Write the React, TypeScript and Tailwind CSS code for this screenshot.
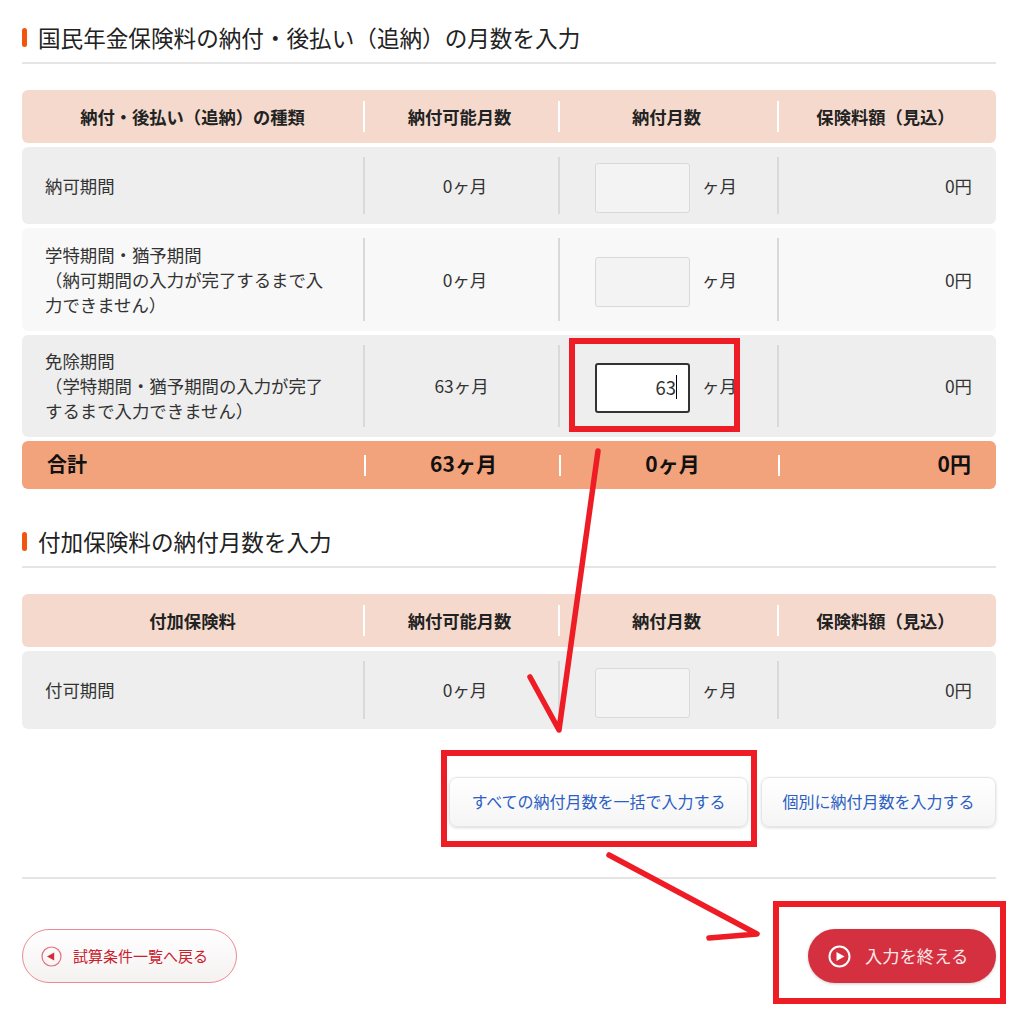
const font = { fontFamily: '"Noto Sans CJK JP", "Noto Sans", sans-serif' };

const cols = "grid grid-cols-[341px_195px_219px_219px]";

function HeaderRow({ first }: { first: string }) {
  const labels = [first, "納付可能月数", "納付月数", "保険料額（見込）"];
  return (
    <div className={`${cols} h-[53px] items-center rounded-md bg-[#f4d9cc] text-[17.3px] font-bold text-[#222]`}>
      {labels.map((label, i) => (
        <div key={label} className={`flex h-[31px] items-center justify-center ${i > 0 ? "border-l-2 border-white pr-[4px]" : ""}`}>
          {label}
        </div>
      ))}
    </div>
  );
}

function MonthInput({ state }: { state: "idle" | "focus" }) {
  if (state === "focus") {
    return (
      <div className="mt-[4px] flex h-[50px] w-[95px] items-center justify-end rounded-[3px] border-2 border-[#333] bg-white pb-[2px] pr-[11px] text-[18.5px] text-[#333]">
        63<span className="h-[24px] w-px bg-black" />
      </div>
    );
  }
  return <div className="mt-[5px] h-[50px] w-[95px] rounded-[3px] border border-[#d9d9d9] bg-[#f3f3f3]" />;
}

function DataRow({
  height,
  tone,
  label,
  available,
  focus,
}: {
  height: string;
  tone: string;
  label: React.ReactNode;
  available: string;
  focus?: boolean;
}) {
  return (
    <div className={`${cols} items-center rounded-md text-[17.4px] leading-[25px] text-[#333] ${height} ${tone}`}>
      <div className="pb-[1px] pl-[23px] pr-[30px]">{label}</div>
      <div className={`flex h-[calc(100%-20px)] items-center justify-center border-l-2 border-[#d9d9d9] pb-[1px] ${focus ? "" : "pl-[7px]"}`}>
        {available}
      </div>
      <div className="flex h-[calc(100%-20px)] items-center gap-[12px] border-l-2 border-[#d9d9d9] pl-[35px]">
        <MonthInput state={focus ? "focus" : "idle"} />
        <span className="pb-[1px]">ヶ月</span>
      </div>
      <div className="flex h-[calc(100%-20px)] items-center justify-end border-l-2 border-[#d9d9d9] pb-[1px] pr-[24px]">0円</div>
    </div>
  );
}

function SectionTitle({ children }: { children: React.ReactNode }) {
  return (
    <div className="flex h-[51px] items-center gap-[11px] border-b-2 border-[#e5e5e5] text-[22.6px] text-[#222]">
      <span className="h-[19px] w-[5px] rounded-sm bg-[#f0560f]" />
      {children}
    </div>
  );
}

function Annotations() {
  return (
    <>
      <div className="absolute left-[569px] top-[338px] h-[94px] w-[171px] border-[6px] border-[#ee1c25]" />
      <div className="absolute left-[441px] top-[750px] h-[97px] w-[316px] border-[6px] border-[#ee1c25]" />
      <div className="absolute left-[773px] top-[901px] h-[103px] w-[233px] border-[6px] border-[#ee1c25]" />
      <svg className="absolute left-0 top-0" width="1019" height="1024" fill="none" stroke="#ee1c25" strokeWidth="5.5" strokeLinecap="round" strokeLinejoin="round">
        <path d="M598 451 L559 730 L530 677" />
        <path d="M609 855 L757 934 L709 938" />
      </svg>
    </>
  );
}

export default function App() {
  return (
    <div className="relative h-[1024px] w-[1019px] overflow-hidden bg-white" style={font}>
      <div className="ml-[22px] flex w-[974px] flex-col pt-[13px]">
        <SectionTitle>国民年金保険料の納付・後払い（追納）の月数を入力</SectionTitle>

        <div className="mt-[26px] flex flex-col gap-[4px]">
          <HeaderRow first="納付・後払い（追納）の種類" />
          <DataRow height="h-[77px]" tone="bg-[#eeeeee]" label="納可期間" available="0ヶ月" />
          <DataRow
            height="h-[103px]"
            tone="bg-[#f8f8f8]"
            label={
              <>
                学特期間・猶予期間
                <br />
                （納可期間の入力が完了するまで入力できません）
              </>
            }
            available="0ヶ月"
          />
          <DataRow
            height="h-[102px]"
            tone="bg-[#eeeeee]"
            label={
              <>
                免除期間
                <br />
                （学特期間・猶予期間の入力が完了するまで入力できません）
              </>
            }
            available="63ヶ月"
            focus
          />
          <div className="grid h-[48px] grid-cols-[342px_195px_219px_218px] items-center rounded-md bg-[#f2a37b] text-[21px] font-bold text-[#111]">
            <div className="pb-[2px] pl-[25px] text-[20px]">合計</div>
            <div className="flex h-[21px] items-center justify-center border-l-2 border-white pb-[2px] pl-[2px]">63ヶ月</div>
            <div className="flex h-[21px] items-center justify-center border-l-2 border-white pb-[2px] pl-[6px]">0ヶ月</div>
            <div className="flex h-[21px] items-center justify-end border-l-2 border-white pb-[2px] pr-[25px]">0円</div>
          </div>
        </div>

        <div className="mt-[28px]">
          <SectionTitle>付加保険料の納付月数を入力</SectionTitle>
        </div>

        <div className="mt-[26px] flex flex-col gap-[4px]">
          <HeaderRow first="付加保険料" />
          <DataRow height="h-[78px]" tone="bg-[#eeeeee]" label="付可期間" available="0ヶ月" />
        </div>

        <div className="mt-[48px] flex justify-end gap-[13px]">
          <button className="h-[50px] w-[299px] rounded-lg border border-[#e6e6e6] bg-gradient-to-b from-white to-[#f5f5f5] pb-[2px] text-[16px] text-[#2b5fc4] shadow-[0_1px_3px_rgba(0,0,0,0.15)]">
            すべての納付月数を一括で入力する
          </button>
          <button className="h-[50px] w-[235px] rounded-lg border border-[#e6e6e6] bg-gradient-to-b from-white to-[#f5f5f5] pb-[2px] text-[16px] text-[#2b5fc4] shadow-[0_1px_3px_rgba(0,0,0,0.15)]">
            個別に納付月数を入力する
          </button>
        </div>

        <div className="mt-[50px] h-[2px] bg-[#e5e5e5]" />

        <div className="mt-[50px] flex items-center justify-between">
          <button className="flex h-[54px] w-[215px] items-center gap-[11px] rounded-full border border-[#ea8a93] bg-gradient-to-b from-white to-[#f5f1f1] pl-[18px] text-[15px] text-[#c9202c]">
            <svg width="21" height="21" viewBox="0 0 21 21" fill="none">
              <circle cx="10.5" cy="10.5" r="9.5" stroke="#e4737d" strokeWidth="1.2" />
              <path d="M6 10.5 L13.2 6.5 V14.5 Z" fill="#d22f3b" />
            </svg>
            試算条件一覧へ戻る
          </button>
          <button className="flex h-[54px] w-[188px] items-center gap-[14px] rounded-full bg-[#d5303f] pl-[20px] text-[17.3px] text-[#fbe9ea] shadow-[0_1px_3px_rgba(0,0,0,0.2)]">
            <svg width="23" height="23" viewBox="0 0 23 23" fill="none">
              <circle cx="11.5" cy="11.5" r="10" stroke="white" strokeWidth="2" />
              <path d="M8.5 7 L16.5 11.5 L8.5 16 Z" fill="white" />
            </svg>
            入力を終える
          </button>
        </div>
      </div>

      <Annotations />
    </div>
  );
}
